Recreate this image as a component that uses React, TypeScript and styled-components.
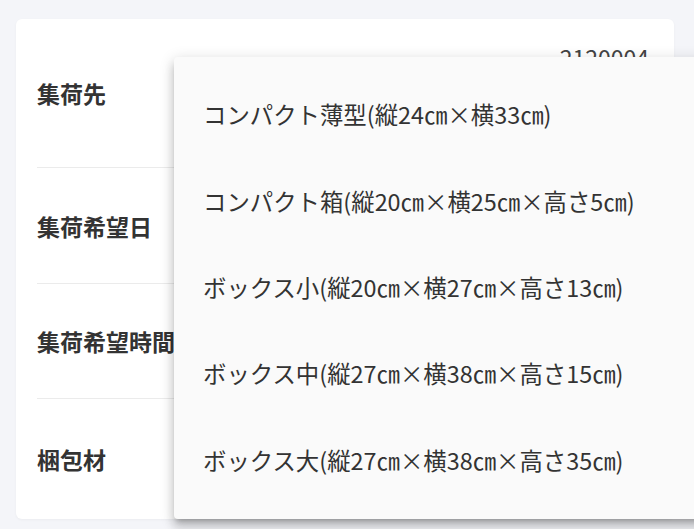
import React from "react";
import styled, { createGlobalStyle } from "styled-components";

const Global = createGlobalStyle`
  html, body { margin: 0; padding: 0; }
  body {
    background: #f4f5f9;
    font-family: "Noto Sans CJK JP", "Noto Sans", sans-serif;
    overflow: hidden;
    width: 694px;
    height: 529px;
  }
`;

const Page = styled.div`
  position: relative;
  width: 694px;
  height: 529px;
  padding: 19px 20px 8px 16px;
  box-sizing: border-box;
  overflow: hidden;
`;

const Card = styled.div`
  background: #ffffff;
  border-radius: 6px;
  box-shadow: 0 1px 3px rgba(0, 0, 0, 0.04);
  padding: 0 21px;
  display: flex;
  flex-direction: column;
`;

const Row = styled.div<{ $h: number; $last?: boolean }>`
  display: flex;
  align-items: center;
  justify-content: space-between;
  height: ${(p) => p.$h}px;
  border-bottom: ${(p) => (p.$last ? "none" : "1px solid #ebebeb")};
`;

const Label = styled.div`
  font-size: 23px;
  font-weight: 700;
  color: #333333;
  white-space: nowrap;
`;

const Value = styled.div`
  font-size: 23px;
  line-height: 33px;
  color: #444444;
  text-align: right;
  padding-right: 4px;
  margin-top: -6px;
`;

const Menu = styled.ul`
  position: absolute;
  left: 174px;
  top: 57px;
  width: 560px;
  margin: 0;
  padding: 14px 0 16px;
  list-style: none;
  background: #fafafa;
  border-radius: 4px;
  box-shadow: 0px 5px 5px -3px rgba(0, 0, 0, 0.2),
    0px 8px 10px 1px rgba(0, 0, 0, 0.14), 0px 3px 14px 2px rgba(0, 0, 0, 0.12);
  box-sizing: border-box;
`;

const Item = styled.li`
  height: 86.4px;
  display: flex;
  align-items: center;
  padding-left: 29px;
  font-size: 23.4px;
  font-weight: 400;
  color: #333333;
  white-space: nowrap;
`;

const items = [
  "コンパクト薄型(縦24㎝×横33㎝)",
  "コンパクト箱(縦20㎝×横25㎝×高さ5㎝)",
  "ボックス小(縦20㎝×横27㎝×高さ13㎝)",
  "ボックス中(縦27㎝×横38㎝×高さ15㎝)",
  "ボックス大(縦27㎝×横38㎝×高さ35㎝)",
];

export default function App() {
  return (
    <>
      <Global />
      <Page>
        <Card>
          <Row $h={148}>
            <Label>集荷先</Label>
            <Value>
              2120004
              <br />
              神奈川県川崎市幸区
              <br />
              堀川町580
            </Value>
          </Row>
          <Row $h={115}>
            <Label>集荷希望日</Label>
          </Row>
          <Row $h={114}>
            <Label>集荷希望時間</Label>
          </Row>
          <Row $h={120} $last>
            <Label>梱包材</Label>
          </Row>
        </Card>
        <Menu>
          {items.map((t) => (
            <Item key={t}>{t}</Item>
          ))}
        </Menu>
      </Page>
    </>
  );
}
